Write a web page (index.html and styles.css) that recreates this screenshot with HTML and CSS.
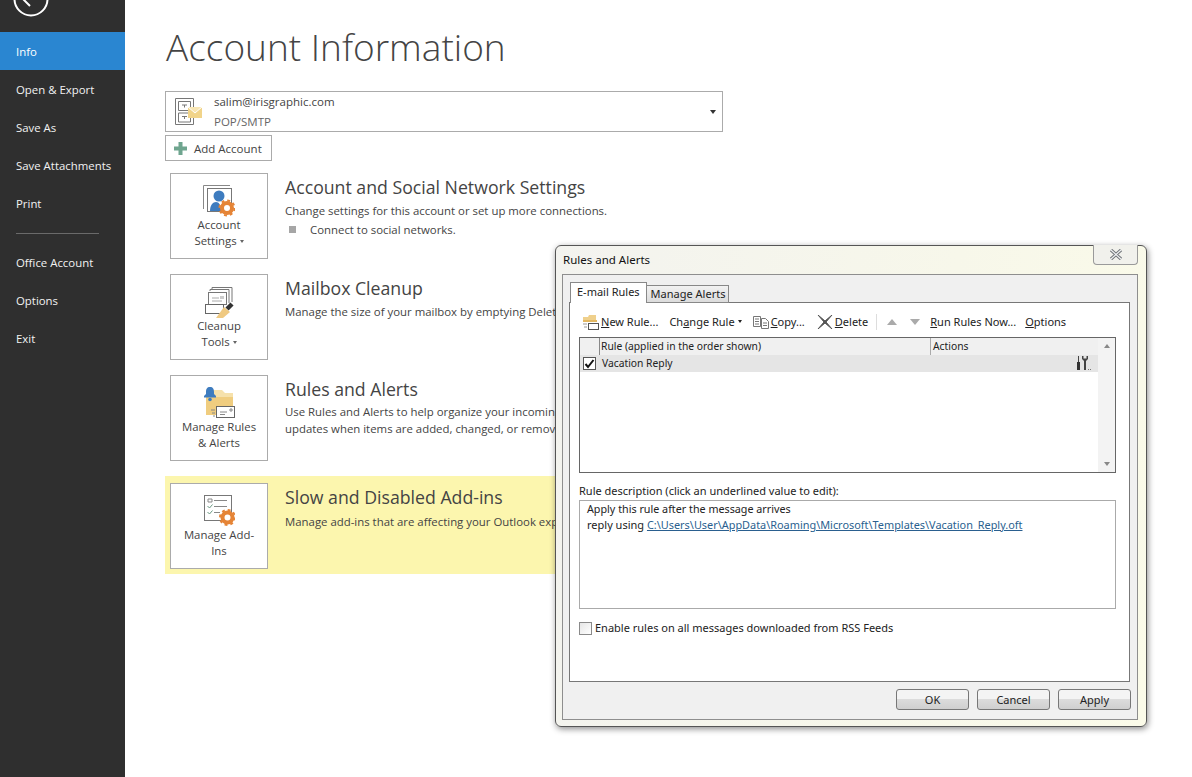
FILE: index.html
```html
<!DOCTYPE html>
<html lang="en">
<head>
    <meta charset="UTF-8">
    <title>Account Information - Outlook</title>
    <link rel="stylesheet" href="styles.css">
</head>
<body>
    <nav class="sidebar">
        <div class="back-btn">
            <svg width="36" height="36" viewBox="0 0 36 36"><circle cx="18" cy="18" r="16.500" fill="none" stroke="#fff" stroke-width="2"/><path d="M27 18H10M17 11l-7 7 7 7" fill="none" stroke="#fff" stroke-width="2"/></svg>
        </div>
        <a class="nav-item active">Info</a>
        <a class="nav-item">Open &amp; Export</a>
        <a class="nav-item">Save As</a>
        <a class="nav-item">Save Attachments</a>
        <a class="nav-item">Print</a>
        <div class="nav-sep"></div>
        <a class="nav-item">Office Account</a>
        <a class="nav-item">Options</a>
        <a class="nav-item">Exit</a>
    </nav>

    <main class="content">
        <h1>Account Information</h1>

        <div class="account-select">
            <svg class="account-icon" width="30" height="30" viewBox="0 0 30 30">
                <path d="M1.500 1.500h18v26h-18zM4.500 4.500h12v9h-12zM4.500 16h12v9h-12z" fill="#fff" stroke="#777"/>
                <path d="M8 8h5M10.500 8v2.500M8 19.500h5M10.500 19.500V22" stroke="#777" fill="none"/>
                <rect x="14" y="10" width="14" height="11" fill="#f1d48a"/>
                <path d="M14 10l7 6 7-6" fill="#f8e6b4" stroke="#fff"/>
            </svg>
            <div class="account-text">
                <span>salim@irisgraphic.com</span>
                <span>POP/SMTP</span>
            </div>
            <span class="select-arrow"></span>
        </div>

        <button class="add-account">
            <svg width="13" height="13" viewBox="0 0 13 13"><path d="M4.500 0h4v4.500H13v4H8.500V13h-4V8.500H0v-4h4.500z" fill="#6fa58f"/></svg>
            Add Account
        </button>

        <section class="info-row">
            <div class="big-btn">
                <svg width="32" height="32" viewBox="0 0 32 32">
                    <path d="M27 .5H.5V24" stroke="#888" fill="none"/>
                    <rect x="4.500" y="3.500" width="24" height="23" fill="#fff" stroke="#777"/>
                    <circle cx="16" cy="11" r="5.500" fill="#3e7cbf"/>
                    <path d="M7 26c0-6 3-9 6-9s5 3 5 9z" fill="#3e7cbf"/>
                    <circle cx="24" cy="23" r="5" fill="#fff" stroke="#e58436" stroke-width="4"/>
                    <circle cx="24" cy="23" r="7.500" fill="none" stroke="#e58436" stroke-width="2" stroke-dasharray="2.900 2.990"/>
                </svg>
                <span>Account<br>Settings <i class="caret"></i></span>
            </div>
            <div class="info-text">
                <h2>Account and Social Network Settings</h2>
                <p>Change settings for this account or set up more connections.</p>
                <p class="bullet">Connect to social networks.</p>
            </div>
        </section>

        <section class="info-row">
            <div class="big-btn">
                <svg width="32" height="32" viewBox="0 0 32 32">
                    <path d="M9 3V1.500h20V16" fill="none" stroke="#777"/>
                    <path d="M7 5V3.500h19V17" fill="none" stroke="#777"/>
                    <rect x="5.500" y="6.500" width="18" height="12" fill="#fff" stroke="#777"/>
                    <path d="M9 12h7M9 15h10" stroke="#aaa"/>
                    <path d="M17 10h4v3h-4z" fill="#ccc"/>
                    <rect x="2.500" y="18.500" width="18" height="9" fill="#fff" stroke="#666"/>
                    <path d="M29 18l-5 5" stroke="#333" stroke-width="4.500"/>
                    <path d="M21 21l6 5-7 6h-7z" fill="#efc981"/>
                </svg>
                <span>Cleanup<br>Tools <i class="caret"></i></span>
            </div>
            <div class="info-text">
                <h2>Mailbox Cleanup</h2>
                <p>Manage the size of your mailbox by emptying Deleted Items and archiving.</p>
            </div>
        </section>

        <section class="info-row">
            <div class="big-btn">
                <svg width="32" height="32" viewBox="0 0 32 32">
                    <path d="M9 3h10l3 3h8v8H9z" fill="#f6e1ab"/>
                    <path d="M3 10h27v18H3z" fill="#f0cd7f"/>
                    <path d="M7 0C4 0 3 2 3 5v2L1 9v1.500h12V9l-2-2V5c0-3-1-5-4-5z" fill="#3e7cbf"/>
                    <circle cx="7" cy="12.500" r="1.800" fill="#3e7cbf"/>
                    <rect x="13.500" y="19.500" width="18" height="11" fill="#fff" stroke="#666"/>
                    <path d="M17 25h7M17 27.500h5M27 22h2v2h-2z" stroke="#888" fill="none"/>
                    <path d="M8 23h4M9 26h3M10 29h2" stroke="#888"/>
                </svg>
                <span>Manage Rules<br>&amp; Alerts</span>
            </div>
            <div class="info-text rules-text">
                <h2>Rules and Alerts</h2>
                <p>Use Rules and Alerts to help organize your incoming e-mail messages, and receive<br>updates when items are added, changed, or removed.</p>
            </div>
        </section>

        <section class="info-row highlight">
            <div class="big-btn">
                <svg width="32" height="32" viewBox="0 0 32 32">
                    <rect x="1.500" y=".5" width="27" height="25" fill="#fff" stroke="#777"/>
                    <path d="M5 4h4v3H5z" fill="none" stroke="#888"/>
                    <path d="M11 5.500h13M11 11.500h13M11 17.500h6" stroke="#888"/>
                    <path d="M4.500 11l2 2 3-3.500M4.500 17l2 2 3-3.500" fill="none" stroke="#6a9a83"/>
                    <circle cx="24.500" cy="22.500" r="5" fill="#fff" stroke="#e58436" stroke-width="4"/>
                    <circle cx="24.500" cy="22.500" r="7.500" fill="none" stroke="#e58436" stroke-width="2" stroke-dasharray="2.900 2.990"/>
                </svg>
                <span>Manage Add-<br>Ins</span>
            </div>
            <div class="info-text addins-text">
                <h2>Slow and Disabled Add-ins</h2>
                <p>Manage add-ins that are affecting your Outlook experience.</p>
            </div>
        </section>
    </main>

    <div class="dialog">
        <div class="dialog-title">
            <span>Rules and Alerts</span>
            <button class="close-btn">
                <svg width="14" height="11" viewBox="0 0 14 11"><path d="M2 1l10 9M12 1L2 10" stroke="#6f7378" stroke-width="3.200"/><path d="M2 1l10 9M12 1L2 10" stroke="#eef0f2" stroke-width="1.200"/></svg>
            </button>
        </div>
        <div class="dialog-body">
            <div class="tabs">
                <span class="tab active">E-mail Rules</span>
                <span class="tab">Manage Alerts</span>
            </div>
            <div class="tab-page">
                <div class="toolbar">
                    <span class="tool">
                        <svg width="16" height="16" viewBox="0 0 16 16"><path d="M0 3h5l1-2h7v5H0z" fill="#efd08c"/><path d="M0 6h14v2H0z" fill="#e3b862"/><rect x="5.500" y="9.500" width="10" height="6" fill="#fff" stroke="#555"/><path d="M0 10h4M1 13h3" stroke="#999"/></svg>
                        <span><u>N</u>ew Rule...</span>
                    </span>
                    <span class="tool change"><span>Ch<u>a</u>nge Rule</span> <i class="caret dark"></i></span>
                    <span class="tool copy">
                        <svg width="16" height="14" viewBox="0 0 16 14"><path d="M.500 1.500h7v10h-7zM2 4h4M2 6.500h4M2 9h4" fill="#fff" stroke="#777"/><path d="M8.500 3.500h4l3 3v7h-7zM10 8h4M10 10.500h4" fill="#fff" stroke="#777"/></svg>
                        <span><u>C</u>opy...</span>
                    </span>
                    <span class="tool delete">
                        <svg width="16" height="14" viewBox="0 0 16 14"><path d="M1 0l7 6 7-6-6 7 6 7-7-6-7 6 6-7z" fill="#555" stroke="#555"/></svg>
                        <span><u>D</u>elete</span>
                    </span>
                    <span class="tool-sep"></span>
                    <i class="move-up"></i>
                    <i class="move-down"></i>
                    <span class="tool run"><span><u>R</u>un Rules Now...</span></span>
                    <span class="tool"><span><u>O</u>ptions</span></span>
                </div>

                <div class="rule-list">
                    <div class="rule-main">
                        <div class="rule-head">
                            <span class="col-rule">Rule (applied in the order shown)</span>
                            <span class="col-actions">Actions</span>
                        </div>
                        <div class="rule-item">
                            <span class="check checked">
                                <svg width="11" height="10" viewBox="0 0 11 10"><path d="M1.500 5l2.500 3 5.500-7" fill="none" stroke="#111" stroke-width="2"/></svg>
                            </span>
                            <span class="rule-name">Vacation Reply</span>
                            <svg class="rule-tools" width="16" height="15" viewBox="0 0 16 15"><path d="M2.500 0v7" stroke="#444"/><path d="M1 6h3v8H1z" fill="#333"/><path d="M6 0v3l2 2v9h2V5l2-2V0h-1.500v2.500h-3V0z" fill="#444"/><path d="M12 13.500h1M14 13.500h1" stroke="#777"/></svg>
                        </div>
                    </div>
                    <div class="scrollbar">
                        <i class="scroll-up"></i>
                        <i class="scroll-down"></i>
                    </div>
                </div>

                <div class="desc-label">Rule description (click an underlined value to edit):</div>
                <div class="desc-box">
                    <p>Apply this rule after the message arrives</p>
                    <p>reply using <a>C:\Users\User\AppData\Roaming\Microsoft\Templates\Vacation_Reply.oft</a></p>
                </div>

                <label class="rss-option">
                    <span class="check"></span>
                    Enable rules on all messages downloaded from RSS Feeds
                </label>
            </div>
            <div class="dialog-buttons">
                <button>OK</button>
                <button>Cancel</button>
                <button>Apply</button>
            </div>
        </div>
    </div>
</body>
</html>
```

FILE: styles.css
```css
* {
    margin: 0;
    padding: 0;
    box-sizing: border-box;
}

html, body {
    height: 100%;
    overflow: hidden;
}

body {
    display: flex;
    background: #fff;
    color: #444;
    font-family: "Open Sans", "Noto Sans", sans-serif;
    font-size: 11.400px;
}

/* left column */
.sidebar {
    width: 125px;
    flex-shrink: 0;
    background: #2f2f2f;
    color: #f2f2f2;
}

.back-btn {
    height: 32px;
    padding-left: 13px;
    overflow: hidden;
}

.back-btn svg {
    display: block;
    margin-top: -19px;
}

.nav-item {
    display: block;
    height: 38px;
    line-height: 39px;
    padding-left: 16px;
    white-space: nowrap;
}

.nav-item.active {
    background: #2a86d1;
    color: #fff;
}

.nav-sep {
    width: 83px;
    height: 1px;
    margin: 11px 0 9px 16px;
    background: #6a6a6a;
}

/* account page */
.content {
    flex: 1;
    padding: 23px 0 0 40px;
}

h1 {
    font-size: 37px;
    font-weight: 300;
    line-height: 48px;
    color: #444;
    margin-left: 1px;
    margin-bottom: 20px;
}

.account-select {
    display: flex;
    align-items: center;
    width: 558px;
    height: 41px;
    border: 1px solid #ababab;
    padding: 0 6px 0 8px;
}

.account-icon {
    flex-shrink: 0;
}

.account-text {
    flex: 1;
    display: flex;
    flex-direction: column;
    gap: 4px;
    padding-left: 10px;
    font-size: 11.500px;
    line-height: 16px;
}

.account-text span:last-child {
    color: #666;
}

.select-arrow {
    border-left: 3.500px solid transparent;
    border-right: 3.500px solid transparent;
    border-top: 4px solid #333;
}

.add-account {
    display: flex;
    align-items: center;
    gap: 7px;
    width: 107px;
    height: 26px;
    margin: 3px 0 12px;
    padding: 0 0 0 8px;
    border: 1px solid #ababab;
    background: #fff;
    color: #444;
    font: inherit;
    font-size: 11.500px;
}

.info-row {
    display: flex;
    width: 558px;
    height: 86px;
    margin-bottom: 15px;
    margin-left: 5px;
}

.info-row.highlight {
    height: 98px;
    margin: 15px 0 0;
    padding: 7px 5px;
    background: #fcf6ae;
}

.big-btn {
    width: 98px;
    height: 86px;
    flex-shrink: 0;
    display: flex;
    flex-direction: column;
    align-items: center;
    padding-top: 11px;
    border: 1px solid #ababab;
    background: #fff;
    text-align: center;
    line-height: 16px;
}

.caret {
    display: inline-block;
    vertical-align: middle;
    border-left: 2.500px solid transparent;
    border-right: 2.500px solid transparent;
    border-top: 3px solid #666;
}

.caret.dark {
    border-top-color: #222;
    margin-left: 3px;
}

.info-text {
    padding: 2px 0 0 17px;
    white-space: nowrap;
}

.info-text h2 {
    font-size: 17.700px;
    font-weight: 400;
    line-height: 25px;
    color: #444;
    margin-bottom: 2px;
}

.info-text p {
    line-height: 17px;
}

.rules-text h2 {
    margin-bottom: 1px;
}

.addins-text h2 {
    margin-bottom: 3px;
}

.bullet {
    position: relative;
    margin-top: 2px;
    padding-left: 25px;
}

.bullet::before {
    content: '';
    position: absolute;
    left: 4px;
    top: 5px;
    width: 7px;
    height: 7px;
    background: #a6a6a6;
}

/* dialog, floats over the page */
.dialog {
    position: absolute;
    left: 555px;
    top: 245px;
    width: 592px;
    height: 482px;
    display: flex;
    flex-direction: column;
    padding: 0 8px 6px 6px;
    border: 1px solid #555;
    border-radius: 6px;
    background: linear-gradient(100deg, #f3f3ef, #f7f7ea 60%, #fbfbe9);
    box-shadow: 1px 2px 6px rgba(0, 0, 0, 0.45);
    color: #222;
    font-family: "Noto Sans", "Open Sans", sans-serif;
    font-size: 11px;
}

.dialog-title {
    height: 28px;
    display: flex;
    justify-content: space-between;
    flex-shrink: 0;
    padding-left: 1px;
    font-size: 11.500px;
    line-height: 27px;
    color: #111;
}

.close-btn {
    width: 45px;
    height: 20px;
    margin-top: -1px;
    border: 1px solid #9a9a9a;
    border-top: none;
    border-radius: 0 0 4px 4px;
    background: #f1f1ec;
    display: flex;
    align-items: center;
    justify-content: center;
}

.dialog-body {
    flex: 1;
    display: flex;
    flex-direction: column;
    padding: 7px 7px 0 6px;
    border: 1px solid #8e8e8e;
    background: #f0f0f0;
}

.tabs {
    display: flex;
    align-items: flex-end;
    height: 21px;
    padding-left: 1px;
    position: relative;
    z-index: 1;
    margin-bottom: -1px;
}

.tab {
    height: 18px;
    line-height: 15px;
    padding: 0 3px 0 4px;
    border: 1px solid #888;
    border-left: none;
    background: linear-gradient(#f2f2f2, #dcdcdc);
}

.tab.active {
    height: 21px;
    line-height: 17px;
    padding: 0 6px;
    border-left: 1px solid #888;
    border-bottom: none;
    background: #fff;
}

.tab-page {
    height: 380px;
    padding: 8px 13px 0 9px;
    border: 1px solid #777;
    background: #fff;
}

.toolbar {
    display: flex;
    align-items: center;
    height: 21px;
    margin-bottom: 5px;
    padding-left: 4px;
    white-space: nowrap;
}

.tool {
    display: flex;
    align-items: center;
    gap: 2px;
    margin-right: 11px;
}

.tool.change {
    margin-right: 11px;
    gap: 0;
}

.tool.copy {
    margin-right: 12px;
}

.tool.delete {
    margin-right: 8px;
}

.tool-sep {
    width: 1px;
    height: 16px;
    margin: 0 3px 0 0;
    background: #ddd;
}

.move-up,
.move-down {
    width: 0;
    height: 0;
    margin: 0 6px 0 7px;
    border-left: 5px solid transparent;
    border-right: 5px solid transparent;
}

.move-up {
    border-bottom: 6px solid #aaa;
}

.move-down {
    border-top: 6px solid #aaa;
    margin-right: 10px;
}

.tool.run {
    margin-right: 9px;
}

.rule-list {
    display: flex;
    height: 136px;
    border: 1px solid #666;
    margin-bottom: 10px;
}

.rule-main {
    flex: 1;
}

.rule-head {
    display: flex;
    height: 17px;
    background: #f0f0f0;
    font-size: 10.300px;
    line-height: 16px;
}

.col-rule {
    width: 350px;
    padding-left: 21px;
    background: linear-gradient(#888, #888) 19px 0 / 1px 100% no-repeat;
}

.col-actions {
    flex: 1;
    padding-left: 2px;
    border-left: 1px solid #aaa;
}

.rule-item {
    display: flex;
    align-items: center;
    height: 17px;
    background: #e5e5e5;
    padding-left: 3px;
}

.check {
    width: 13px;
    height: 13px;
    flex-shrink: 0;
    display: inline-flex;
    align-items: center;
    justify-content: center;
    border: 1px solid #8a8a8a;
    background: linear-gradient(135deg, #e6e6e6, #fff);
}

.check.checked {
    border-color: #555;
    background: #fff;
}

.rule-name {
    flex: 1;
    padding: 0 0 2px 6px;
    font-size: 10.300px;
}

.rule-tools {
    margin-right: 6px;
}

.scrollbar {
    width: 17px;
    flex-shrink: 0;
    display: flex;
    flex-direction: column;
    justify-content: space-between;
    align-items: center;
    padding: 6px 0;
    background: #f3f3f3;
}

.scroll-up,
.scroll-down {
    border-left: 3.500px solid transparent;
    border-right: 3.500px solid transparent;
}

.scroll-up {
    border-bottom: 4px solid #888;
}

.scroll-down {
    border-top: 4px solid #888;
}

.desc-label {
    line-height: 16px;
    margin-bottom: 1px;
}

.desc-box {
    height: 109px;
    padding: 1px 7px;
    border: 1px solid #aaa;
    line-height: 15px;
}

.desc-box p:first-child {
    font-size: 10.750px;
}

.desc-box a {
    color: #2a5f8f;
    font-size: 10.900px;
    text-decoration: underline;
}

.rss-option {
    display: flex;
    align-items: center;
    gap: 3px;
    margin-top: 12px;
    line-height: 14px;
}

.dialog-buttons {
    display: flex;
    justify-content: flex-end;
    gap: 8px;
    padding-top: 7px;
    margin-right: -1px;
}

.dialog-buttons button {
    width: 73px;
    height: 21px;
    border: 1px solid #777;
    border-radius: 3px;
    background: linear-gradient(#f4f4f4 45%, #dcdcdc 50%, #cfcfcf);
    color: #222;
    font: inherit;
}
```
